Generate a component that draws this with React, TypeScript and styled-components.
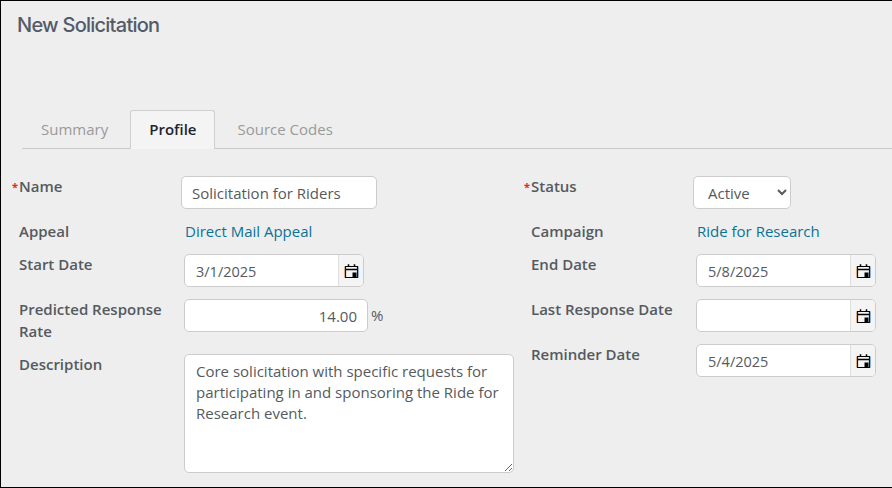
import React from "react";
import styled, { createGlobalStyle } from "styled-components";

const Global = createGlobalStyle`
  html, body { margin: 0; padding: 0; background: #eeeeee; }
  * { box-sizing: border-box; }
`;

const Page = styled.div`
  width: 892px;
  height: 488px;
  overflow: hidden;
  background: #eeeeee;
  border-top: 1px solid #000;
  border-left: 1px solid #000;
  border-bottom: 1px solid #000;
  font-family: "Open Sans", sans-serif;
  font-size: 15px;
  color: #555a60;
`;

const Title = styled.h1`
  margin: 0;
  padding: 11px 0 0 16px;
  height: 109px;
  font-family: Inter, sans-serif;
  font-size: 20px;
  line-height: 27px;
  font-weight: 500;
  letter-spacing: -0.75px;
  color: #545a66;
`;

const Tabs = styled.div`
  display: flex;
  gap: 3px;
  margin-left: 21px;
  height: 39px;
  border-bottom: 1px solid #c9c9c9;
`;

const Tab = styled.div<{ $active?: boolean }>`
  height: 39px;
  padding: 0 18px 2px;
  display: flex;
  align-items: center;
  font-size: 15px;
  font-weight: ${(p) => (p.$active ? 600 : 400)};
  color: ${(p) => (p.$active ? "#1d2530" : "#9a9a9a")};
  background: ${(p) => (p.$active ? "#f4f4f4" : "transparent")};
  border: 1px solid ${(p) => (p.$active ? "#cfcfcf" : "transparent")};
  border-bottom: none;
  border-radius: 3px 3px 0 0;
`;

const Form = styled.div`
  display: grid;
  grid-template-columns: 512px 1fr;
  padding: 27px 0 0 0;
`;

const Column = styled.div`
  display: flex;
  flex-direction: column;
`;

const Row = styled.div<{ $h: number }>`
  display: flex;
  height: ${(p) => p.$h}px;
  padding-left: 18px;
`;

const Label = styled.div<{ $required?: boolean }>`
  position: relative;
  width: 165px;
  flex: none;
  margin-top: -1px;
  font-size: 15px;
  font-weight: 600;
  line-height: 22px;
  color: #555a60;
  ${(p) =>
    p.$required &&
    `&::before {
      content: "*";
      position: absolute;
      left: -7px;
      top: 1px;
      color: #e8232a;
      font-size: 11px;
      font-weight: 700;
    }`}
`;

const PlainValue = styled.a`
  font-size: 15px;
  line-height: 22px;
  margin: -1px 0 0 1px;
  color: #0a7396;
`;

const TextInput = styled.input`
  width: 196px;
  height: 33px;
  margin-left: -3px;
  padding: 1px 10px 0;
  border: 1px solid #cccccc;
  border-radius: 5px;
  background: #fff;
  font: 15px "Open Sans", sans-serif;
  color: #555a60;
  outline: none;
`;

const StatusSelect = styled.select`
  width: 98px;
  height: 33px;
  margin-left: -3px;
  padding: 1px 0 0 10px;
  border: 1px solid #cccccc;
  border-radius: 5px;
  background: #fff;
  font: 15px "Open Sans", sans-serif;
  color: #555a60;
`;

const DateBox = styled.div`
  display: flex;
  width: 180px;
  height: 33px;
  border: 1px solid #cccccc;
  border-radius: 5px;
  overflow: hidden;
  background: #fff;
`;

const DateField = styled.input`
  flex: 1;
  min-width: 0;
  border: none;
  padding: 1px 11px 0;
  background: transparent;
  font: 14.5px "Open Sans", sans-serif;
  color: #555a60;
  outline: none;
`;

const DateButton = styled.div`
  flex: none;
  width: 25px;
  border-left: 1px solid #dedede;
  background: #f4f4f4;
  display: flex;
  align-items: center;
  justify-content: center;
`;

const NumberWrap = styled.div`
  display: flex;
  align-items: flex-start;
  gap: 3px;
`;

const NumberInput = styled.input`
  width: 184px;
  height: 33px;
  padding: 1px 10px 0;
  border: 1px solid #cccccc;
  border-radius: 5px;
  background: #fff;
  text-align: right;
  font: 15px "Open Sans", sans-serif;
  color: #555a60;
  outline: none;
`;

const Unit = styled.span`
  line-height: 33px;
  font-size: 15px;
`;

const Description = styled.textarea`
  flex: none;
  width: 330px;
  height: 119px;
  padding: 6px 11px;
  border: 1px solid #cccccc;
  border-radius: 5px;
  background: #fff;
  font: 15px/21px "Open Sans", sans-serif;
  color: #555a60;
  outline: none;
`;

const CalIcon = () => (
  <svg width="15" height="16" viewBox="0 0 15 16" fill="none">
    <path d="M1.5 3.5h12v11h-12z" stroke="#000" strokeWidth="1.2" />
    <path d="M1.5 6.5h12" stroke="#000" strokeWidth="1.4" />
    <path d="M4.5 1.2v2.6M10.5 1.2v2.6" stroke="#000" strokeWidth="1.5" />
    <path d="M8.5 9.5h4v4.5h-4z" fill="#000" />
    <path d="M.7 3.5v11" stroke="#d9822b" strokeWidth=".7" />
    <path d="M14.3 3.5v11" stroke="#3b8fd9" strokeWidth=".7" />
  </svg>
);

const DateControl = ({ value }: { value: string }) => (
  <DateBox>
    <DateField defaultValue={value} />
    <DateButton>
      <CalIcon />
    </DateButton>
  </DateBox>
);

export default function App() {
  return (
    <Page>
      <Global />
      <Title>New Solicitation</Title>
      <Tabs>
        <Tab>Summary</Tab>
        <Tab $active>Profile</Tab>
        <Tab>Source Codes</Tab>
      </Tabs>
      <Form>
        <Column>
          <Row $h={45}>
            <Label $required>Name</Label>
            <TextInput defaultValue="Solicitation for Riders" />
          </Row>
          <Row $h={33}>
            <Label>Appeal</Label>
            <PlainValue>Direct Mail Appeal</PlainValue>
          </Row>
          <Row $h={45}>
            <Label>Start Date</Label>
            <DateControl value="3/1/2025" />
          </Row>
          <Row $h={55}>
            <Label>Predicted Response Rate</Label>
            <NumberWrap>
              <NumberInput defaultValue="14.00" />
              <Unit>%</Unit>
            </NumberWrap>
          </Row>
          <Row $h={120}>
            <Label>Description</Label>
            <Description defaultValue="Core solicitation with specific requests for participating in and sponsoring the Ride for Research event." />
          </Row>
        </Column>
        <Column>
          <Row $h={45}>
            <Label $required>Status</Label>
            <StatusSelect defaultValue="Active">
              <option>Active</option>
            </StatusSelect>
          </Row>
          <Row $h={33}>
            <Label>Campaign</Label>
            <PlainValue>Ride for Research</PlainValue>
          </Row>
          <Row $h={45}>
            <Label>End Date</Label>
            <DateControl value="5/8/2025" />
          </Row>
          <Row $h={45}>
            <Label>Last Response Date</Label>
            <DateControl value="" />
          </Row>
          <Row $h={45}>
            <Label>Reminder Date</Label>
            <DateControl value="5/4/2025" />
          </Row>
        </Column>
      </Form>
    </Page>
  );
}
